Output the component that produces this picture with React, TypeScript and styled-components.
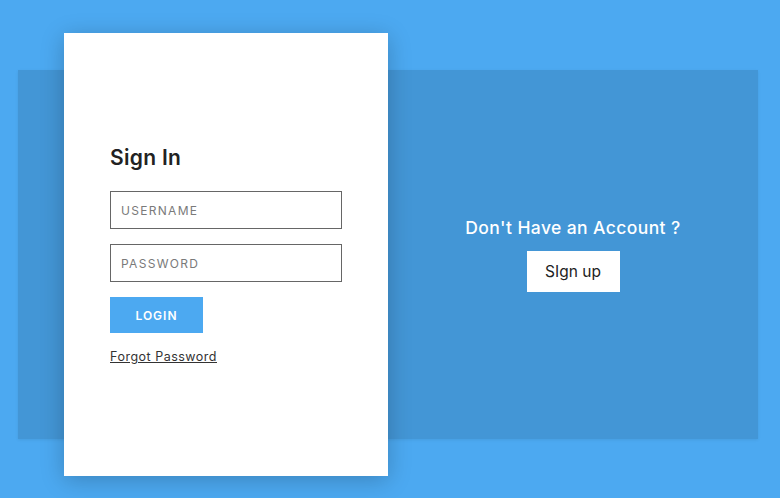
import React from 'react';
import styled, { createGlobalStyle } from 'styled-components';

const GlobalStyle = createGlobalStyle`
  html, body {
    margin: 0;
    padding: 0;
    background: #4ca9f1;
    font-family: Inter, "Noto Sans", sans-serif;
  }
`;

const Page = styled.div`
  width: 780px;
  height: 498px;
  padding: 70px 22px 59px 18px;
  box-sizing: border-box;
`;

const Band = styled.div`
  display: flex;
  height: 369px;
  padding-left: 46px;
  background: #4396d6;
  box-shadow: 0 1px 3px rgba(0, 0, 0, 0.08);
`;

const Card = styled.div`
  width: 324px;
  margin: -37px 0;
  background: #fff;
  box-shadow: 0 4px 22px rgba(0, 0, 0, 0.22);
  display: flex;
  flex-direction: column;
  justify-content: center;
  padding: 0 46px;
  box-sizing: border-box;
`;

const Title = styled.h2`
  margin: 0 0 21px;
  font-size: 21px;
  font-weight: 600;
  color: #222;
  letter-spacing: 0.3px;
`;

const Field = styled.input`
  width: 232px;
  height: 38px;
  box-sizing: border-box;
  border: 1px solid #666;
  padding: 0 10px;
  margin-bottom: 15px;
  font-family: inherit;
  font-size: 12px;
  letter-spacing: 1.3px;
  outline: none;
  &::placeholder {
    color: #7a7a7a;
  }
`;

const LoginButton = styled.button`
  width: 93px;
  height: 36px;
  border: none;
  background: #4ca9f1;
  color: #fff;
  font-family: inherit;
  font-size: 12px;
  font-weight: 600;
  letter-spacing: 1px;
  margin-bottom: 16px;
`;

const Forgot = styled.a`
  font-size: 12.5px;
  color: #333;
  text-decoration: underline;
  letter-spacing: 0.5px;
  align-self: flex-start;
`;

const Side = styled.div`
  flex: 1;
  display: flex;
  flex-direction: column;
  align-items: center;
  justify-content: center;
`;

const Question = styled.p`
  margin: 0 0 13px;
  color: #fff;
  font-size: 17.5px;
  font-weight: 500;
  letter-spacing: 0.4px;
`;

const SignUpButton = styled.button`
  width: 93px;
  height: 41px;
  border: none;
  background: #fff;
  color: #222;
  font-family: inherit;
  font-size: 15.5px;
`;

export default function App() {
  return (
    <>
      <GlobalStyle />
      <Page>
        <Band>
          <Card>
            <Title>Sign In</Title>
            <Field placeholder="USERNAME" />
            <Field placeholder="PASSWORD" type="password" />
            <LoginButton>LOGIN</LoginButton>
            <Forgot href="#">Forgot Password</Forgot>
          </Card>
          <Side>
            <Question>Don't Have an Account ?</Question>
            <SignUpButton>SIgn up</SignUpButton>
          </Side>
        </Band>
      </Page>
    </>
  );
}
